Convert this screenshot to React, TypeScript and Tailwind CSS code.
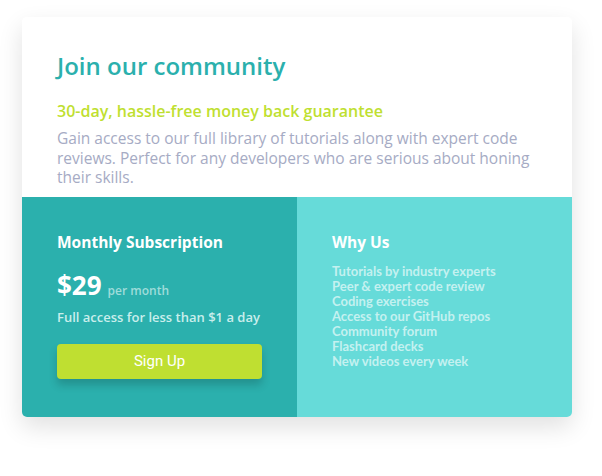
import React from "react";

const font = { fontFamily: "'Open Sans', 'Noto Sans', sans-serif" };

export default function App() {
  const items = [
    "Tutorials by industry experts",
    "Peer & expert code review",
    "Coding exercises",
    "Access to our GitHub repos",
    "Community forum",
    "Flashcard decks",
    "New videos every week",
  ];
  return (
    <div className="bg-white min-h-[476px] w-[602px] pt-[17px] pl-[22px]" style={font}>
      <div className="w-[550px] rounded-[5px] overflow-hidden shadow-[0_10px_25px_rgba(0,0,0,0.12)]">
        <div className="bg-white px-[35px] pt-[34px] pb-[9px]">
          <h1 className="text-[24px] leading-[30px] font-semibold text-[#2bb0ad]">Join our community</h1>
          <p className="mt-[20px] text-[16px] leading-[20px] font-semibold text-[#bfdf31]">
            30-day, hassle-free money back guarantee
          </p>
          <p className="mt-[8px] text-[15.5px] leading-[19.5px] text-[#a6abc4]">
            Gain access to our full library of tutorials along with expert code reviews. Perfect for any developers who are serious about honing their skills.
          </p>
        </div>
        <div className="grid grid-cols-2">
          <div className="bg-[#2bb0ad] px-[35px] pt-[35px] pb-[38px]">
            <h2 className="text-[15.5px] leading-[20px] font-bold text-white">Monthly Subscription</h2>
            <div className="mt-[18px] flex items-baseline gap-[6px] h-[30px]">
              <span className="text-[26px] leading-[30px] font-bold text-white">$29</span>
              <span className="text-[12px] text-[#9fdcda] font-semibold">per month</span>
            </div>
            <p className="mt-[7px] text-[13px] leading-[20px] text-[#c9eeec] font-semibold whitespace-nowrap">
              Full access for less than $1 a day
            </p>
            <button
              className="mt-[17px] w-[205px] h-[35px] rounded-[4px] bg-[#bfdf31] text-white text-[15px] shadow-[0_6px_8px_rgba(0,0,0,0.18)]"
              style={{ fontFamily: "Roboto, sans-serif" }}
            >
              Sign Up
            </button>
          </div>
          <div className="bg-[#66dbd9] px-[35px] pt-[35px] pb-[38px]">
            <h2 className="text-[15.5px] leading-[20px] font-bold text-white">Why Us</h2>
            <ul className="mt-[12px]" style={{ fontFamily: "Lato, sans-serif" }}>
              {items.map((t) => (
                <li key={t} className="text-[13px] leading-[15px] text-[#c4f1f0] font-bold">
                  {t}
                </li>
              ))}
            </ul>
          </div>
        </div>
      </div>
    </div>
  );
}
